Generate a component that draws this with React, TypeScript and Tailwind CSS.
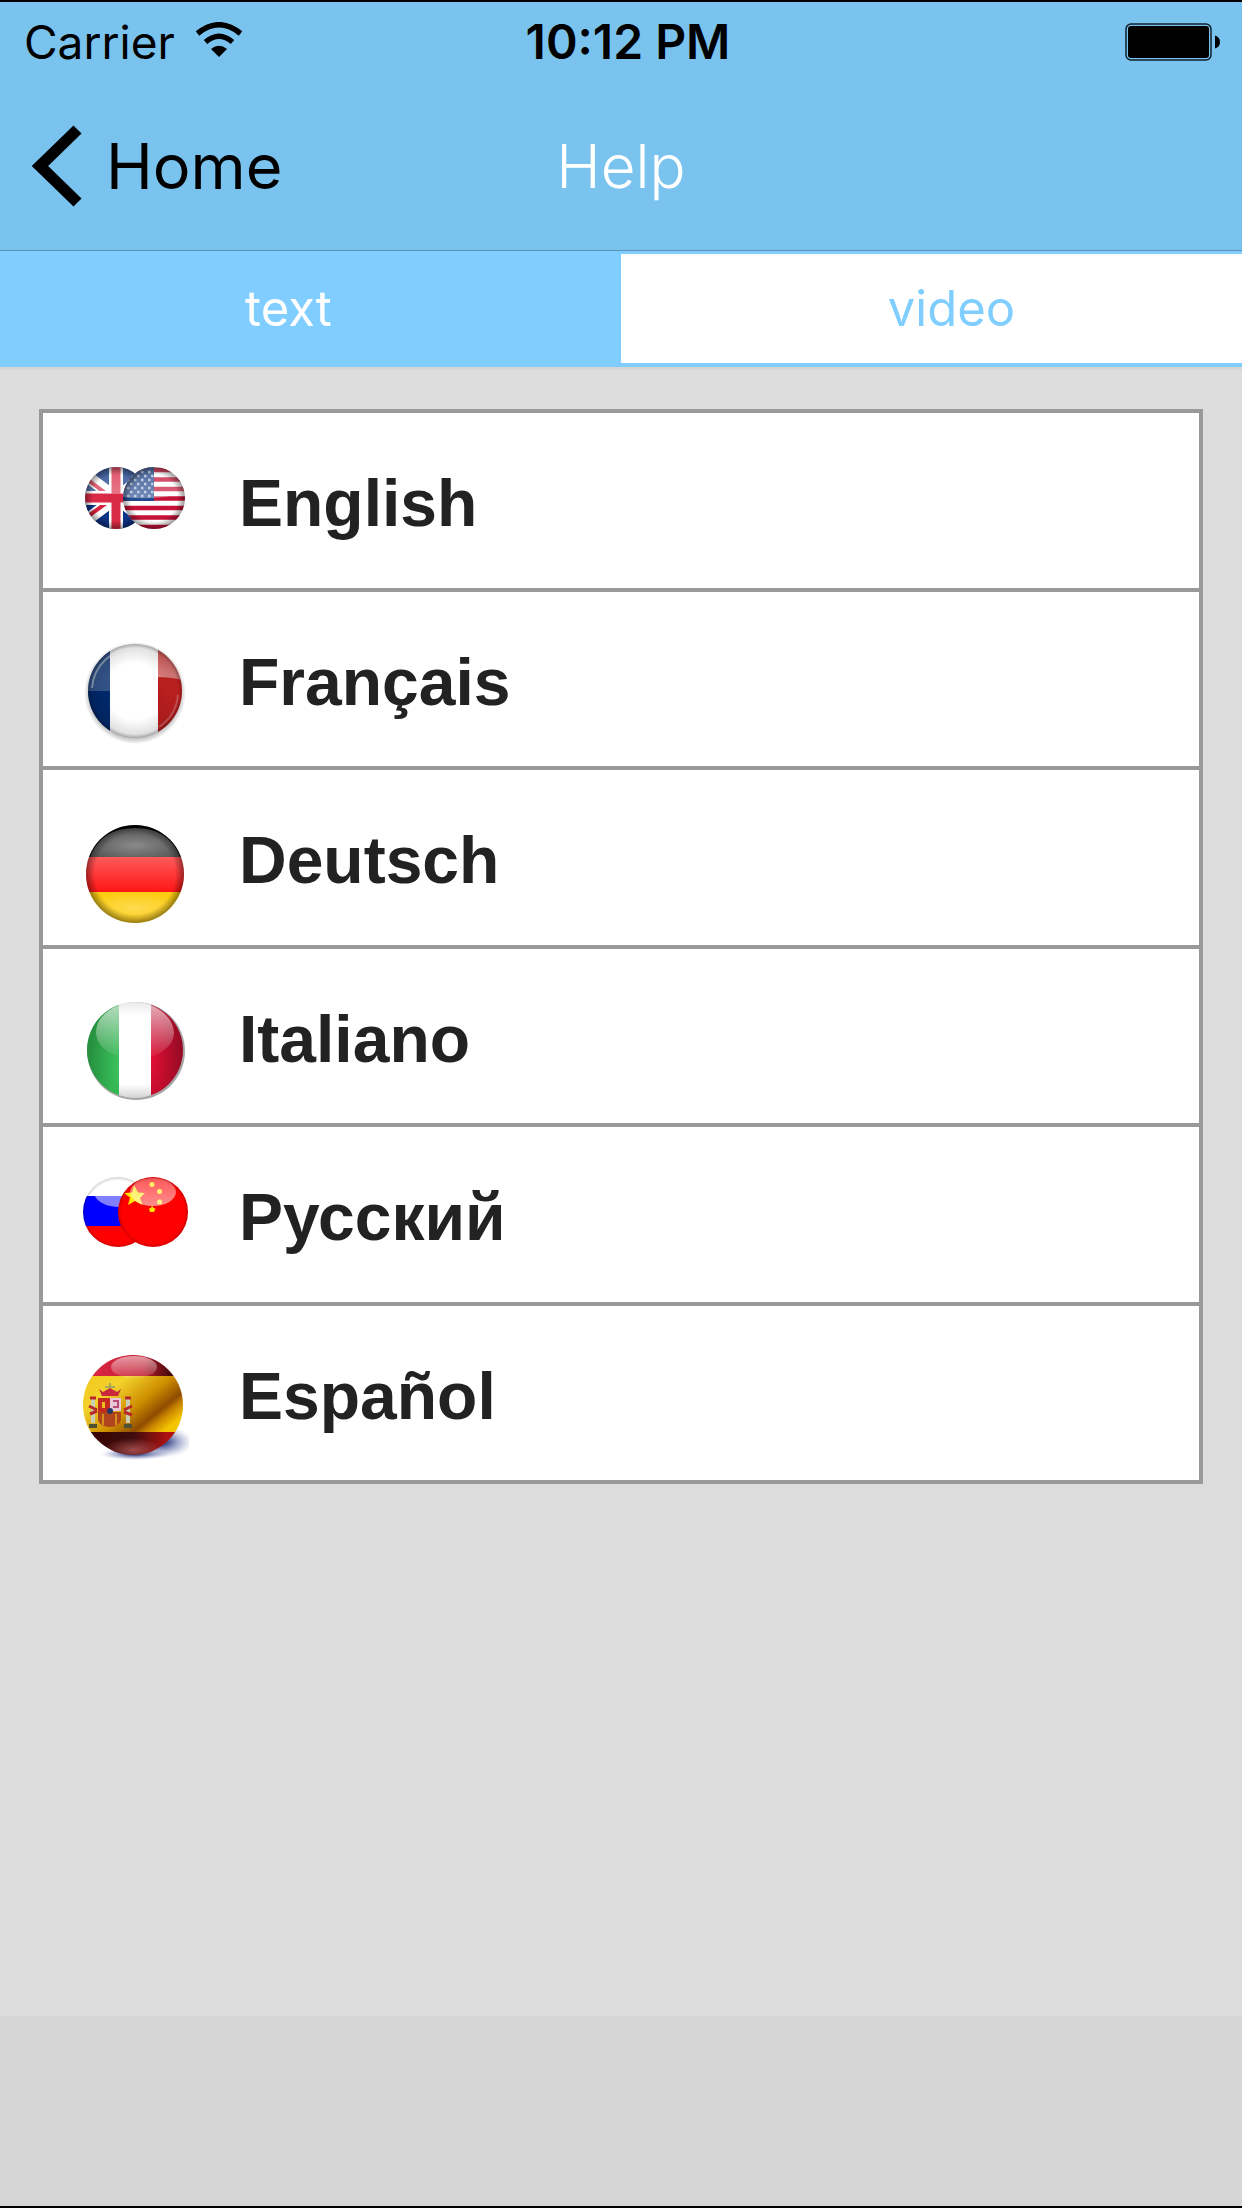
import React, { useState } from "react";

const UkUsFlag = () => (
    <svg viewBox="0 0 108 108" className="w-[108px] h-[108px]" aria-hidden="true">
        <defs>
            <clipPath id="uk-clip"><circle cx="35" cy="37" r="31" /></clipPath>
            <clipPath id="us-clip"><circle cx="73" cy="37" r="31" /></clipPath>
            <radialGradient id="pair-edge">
                <stop offset="0.75" stopColor="#000" stopOpacity="0" />
                <stop offset="1" stopColor="#000" stopOpacity="0.4" />
            </radialGradient>
            <linearGradient id="pair-gloss" x1="0" y1="0" x2="0" y2="1">
                <stop offset="0" stopColor="#fff" stopOpacity="0.2" />
                <stop offset="1" stopColor="#fff" stopOpacity="0.35" />
            </linearGradient>
        </defs>
        <g clipPath="url(#uk-clip)">
            <rect x="4" y="6" width="62" height="62" fill="#0d3486" />
            <path d="M-5 7L75 67M-5 67L75 7" stroke="#fff" strokeWidth="12" />
            <path d="M-5 10L35 40M-5 64L35 35M75 10L35 40M75 64L35 35" stroke="#d4213d" strokeWidth="4" />
            <path d="M35 5V69M3 37H67" stroke="#fff" strokeWidth="14" />
            <path d="M35 5V69M3 37H67" stroke="#d92b45" strokeWidth="9" />
            <path d="M4 6H66V30Q35 36 4 30Z" fill="url(#pair-gloss)" />
        </g>
        <circle cx="35" cy="37" r="31" fill="url(#pair-edge)" />
        <g clipPath="url(#us-clip)">
            <rect x="42" y="6" width="62" height="62" fill="#fff" />
            <path d="M42 9H104M42 18.500H104M42 28H104M42 37.500H104M42 47H104M42 56.500H104M42 66H104" stroke="#c61237" strokeWidth="4.600" />
            <rect x="42" y="6" width="31" height="34" fill="#24498c" />
            <path d="M46 11H73M46 19H73M46 27H73M46 35H73" stroke="#a9bbd8" strokeWidth="2.400" strokeDasharray="2.500 4.500" />
            <path d="M49 15H73M49 23H73M49 31H73" stroke="#a9bbd8" strokeWidth="2.400" strokeDasharray="2.500 4.500" />
            <path d="M42 6H104V32Q73 40 42 36Z" fill="url(#pair-gloss)" />
        </g>
        <circle cx="73" cy="37" r="31" fill="url(#pair-edge)" />
    </svg>
);

const FranceFlag = () => (
    <svg viewBox="0 0 108 108" className="w-[108px] h-[108px]" aria-hidden="true">
        <defs>
            <clipPath id="fr-clip"><circle cx="54" cy="51" r="47" /></clipPath>
            <radialGradient id="fr-edge">
                <stop offset="0.6" stopColor="#000" stopOpacity="0" />
                <stop offset="0.92" stopColor="#000" stopOpacity="0.12" />
                <stop offset="1" stopColor="#000" stopOpacity="0.35" />
            </radialGradient>
            <radialGradient id="fr-shadow">
                <stop offset="0.86" stopColor="#000" stopOpacity="0.3" />
                <stop offset="1" stopColor="#000" stopOpacity="0" />
            </radialGradient>
            <linearGradient id="fr-gloss" x1="0" y1="0" x2="0" y2="1">
                <stop offset="0" stopColor="#fff" stopOpacity="0.2" />
                <stop offset="1" stopColor="#fff" stopOpacity="0.45" />
            </linearGradient>
            <radialGradient id="fr-red" cx="0.1" cy="0.6" r="0.9">
                <stop offset="0" stopColor="#b01c1c" />
                <stop offset="1" stopColor="#dc2626" />
            </radialGradient>
        </defs>
        <circle cx="54" cy="53" r="51" fill="url(#fr-shadow)" />
        <g clipPath="url(#fr-clip)">
            <rect x="6" y="3" width="96" height="96" fill="#fff" />
            <rect x="6" y="3" width="23" height="96" fill="#00286b" />
            <rect x="77" y="3" width="26" height="96" fill="url(#fr-red)" />
            <rect x="6" y="3" width="23" height="48" fill="#fff" fillOpacity="0.2" />
            <path d="M77 3H102V40Q88 37 77 37Z" fill="url(#fr-gloss)" />
            <path d="M11 48A43 43 0 0 1 54 8" stroke="#fff" strokeOpacity="0.4" strokeWidth="2" fill="none" />
            <path d="M97 55A43 43 0 0 1 78 87" stroke="#fff" strokeOpacity="0.25" strokeWidth="2" fill="none" />
        </g>
        <circle cx="54" cy="51" r="47" fill="url(#fr-edge)" />
    </svg>
);

const GermanyFlag = () => (
    <svg viewBox="0 0 108 108" className="w-[108px] h-[108px]" aria-hidden="true">
        <defs>
            <clipPath id="de-clip"><circle cx="54" cy="56" r="49" /></clipPath>
            <radialGradient id="de-edge">
                <stop offset="0.82" stopColor="#000" stopOpacity="0" />
                <stop offset="1" stopColor="#000" stopOpacity="0.4" />
            </radialGradient>
            <radialGradient id="de-black" cx="0.5" cy="0.6" r="0.6">
                <stop offset="0" stopColor="#8a8a8a" />
                <stop offset="1" stopColor="#545454" />
            </radialGradient>
            <linearGradient id="de-red" x1="0" y1="0" x2="0" y2="1">
                <stop offset="0" stopColor="#ff5a5a" />
                <stop offset="1" stopColor="#ff1515" />
            </linearGradient>
            <radialGradient id="de-gold">
                <stop offset="0" stopColor="#ffdc50" />
                <stop offset="1" stopColor="#fbcb12" />
            </radialGradient>
        </defs>
        <g clipPath="url(#de-clip)">
            <rect x="4" y="6" width="100" height="34" fill="#000" />
            <path d="M9 39Q20 10 54 10Q88 10 99 39Z" fill="url(#de-black)" />
            <rect x="4" y="39" width="100" height="35" fill="url(#de-red)" />
            <rect x="4" y="74" width="100" height="32" fill="url(#de-gold)" />
        </g>
        <circle cx="54" cy="56" r="49" fill="url(#de-edge)" />
    </svg>
);

const ItalyFlag = () => (
    <svg viewBox="0 0 108 108" className="w-[108px] h-[108px]" aria-hidden="true">
        <defs>
            <clipPath id="it-clip"><circle cx="54" cy="53" r="48" /></clipPath>
            <radialGradient id="it-green" cx="1" cy="0.7" r="0.9">
                <stop offset="0" stopColor="#3cc45c" />
                <stop offset="1" stopColor="#26913f" />
            </radialGradient>
            <radialGradient id="it-red" cx="0" cy="0.6" r="0.9">
                <stop offset="0" stopColor="#e30f35" />
                <stop offset="1" stopColor="#960a24" />
            </radialGradient>
            <linearGradient id="it-gloss" x1="0" y1="0" x2="0" y2="1">
                <stop offset="0" stopColor="#fff" stopOpacity="0.65" />
                <stop offset="1" stopColor="#fff" stopOpacity="0.05" />
            </linearGradient>
            <linearGradient id="it-white" x1="0" y1="0" x2="0" y2="1">
                <stop offset="0" stopColor="#e8e8e8" />
                <stop offset="0.150" stopColor="#fff" />
                <stop offset="0.850" stopColor="#fff" />
                <stop offset="1" stopColor="#cfcfcf" />
            </linearGradient>
        </defs>
        <circle cx="55" cy="54" r="49" fill="#000" fillOpacity="0.35" />
        <g clipPath="url(#it-clip)">
            <rect x="5" y="4" width="33" height="98" fill="url(#it-green)" />
            <rect x="38" y="4" width="32" height="98" fill="url(#it-white)" />
            <rect x="70" y="4" width="34" height="98" fill="url(#it-red)" />
            <path d="M38 8Q15 18 15 36Q16 52 38 60ZM70 8Q92 18 93 36Q92 52 70 60Z" fill="url(#it-gloss)" />
        </g>
    </svg>
);

const RussiaChinaFlag = () => (
    <svg viewBox="0 0 108 108" className="w-[108px] h-[108px]" aria-hidden="true">
        <defs>
            <clipPath id="ru-clip"><circle cx="37" cy="37" r="35" /></clipPath>
            <radialGradient id="ru-edge">
                <stop offset="0.9" stopColor="#000" stopOpacity="0" />
                <stop offset="1" stopColor="#000" stopOpacity="0.18" />
            </radialGradient>
            <linearGradient id="cn-gloss" x1="0" y1="0" x2="0" y2="1">
                <stop offset="0" stopColor="#fff" stopOpacity="0.35" />
                <stop offset="1" stopColor="#fff" stopOpacity="0.55" />
            </linearGradient>
        </defs>
        <g clipPath="url(#ru-clip)">
            <rect x="2" y="2" width="70" height="19" fill="#fff" />
            <rect x="2" y="21" width="70" height="30" fill="#00f" />
            <rect x="2" y="51" width="70" height="21" fill="#f00" />
            <ellipse cx="37" cy="17" rx="24" ry="15" fill="#fff" fillOpacity="0.5" />
        </g>
        <circle cx="37" cy="37" r="35" fill="url(#ru-edge)" />
        <circle cx="72" cy="37" r="35" fill="#f00" />
        <path d="M53 10L57 17.500L64 18L59 23L61.500 30L54 26L47 30L49 22.500L43 18L51 17.500Z" fill="#ffe600" />
        <circle cx="71" cy="9.500" r="2.500" fill="#ffe600" />
        <circle cx="78.500" cy="16.500" r="2.500" fill="#ffe600" />
        <circle cx="78.500" cy="27" r="2.500" fill="#ffe600" />
        <path d="M71 30.500L72.500 33L74.500 33.500L73 37H69L68 33.500L70 33Z" fill="#ffe600" />
        <ellipse cx="72" cy="17" rx="23" ry="14" fill="url(#cn-gloss)" />
        <circle cx="72" cy="37" r="35" fill="url(#ru-edge)" />
    </svg>
);

const SpainFlag = () => (
    <svg viewBox="0 0 108 108" className="w-[108px] h-[108px]" aria-hidden="true">
        <defs>
            <clipPath id="es-clip"><circle cx="52" cy="51" r="50" /></clipPath>
            <linearGradient id="es-gold" x1="0" y1="0" x2="1" y2="0.700">
                <stop offset="0" stopColor="#f2c81a" />
                <stop offset="0.300" stopColor="#f2d22c" />
                <stop offset="0.600" stopColor="#cf8f00" />
                <stop offset="0.800" stopColor="#8f4c00" />
                <stop offset="0.880" stopColor="#c98600" />
                <stop offset="1" stopColor="#f5c400" />
            </linearGradient>
            <linearGradient id="es-top" x1="0" y1="0" x2="1" y2="0">
                <stop offset="0" stopColor="#e02a48" />
                <stop offset="0.600" stopColor="#c01c30" />
                <stop offset="0.900" stopColor="#3a0808" />
            </linearGradient>
            <linearGradient id="es-bottom" x1="0" y1="0" x2="1" y2="0">
                <stop offset="0.150" stopColor="#3a0505" />
                <stop offset="0.500" stopColor="#3d0c0c" />
                <stop offset="0.850" stopColor="#b01212" />
            </linearGradient>
            <radialGradient id="es-shadow">
                <stop offset="0.200" stopColor="#2c3a80" stopOpacity="0.9" />
                <stop offset="1" stopColor="#8a94c8" stopOpacity="0" />
            </radialGradient>
            <radialGradient id="es-glow">
                <stop offset="0" stopColor="#f88" stopOpacity="0.5" />
                <stop offset="1" stopColor="#f88" stopOpacity="0" />
            </radialGradient>
            <linearGradient id="es-gloss" x1="0" y1="0" x2="0" y2="1">
                <stop offset="0" stopColor="#fff" stopOpacity="0.55" />
                <stop offset="1" stopColor="#fff" stopOpacity="0.1" />
            </linearGradient>
        </defs>
        <ellipse cx="80" cy="88" rx="32" ry="16" fill="url(#es-shadow)" />
        <ellipse cx="54" cy="100" rx="34" ry="6" fill="url(#es-shadow)" />
        <g clipPath="url(#es-clip)">
            <rect x="2" y="0" width="100" height="22" fill="url(#es-top)" />
            <rect x="2" y="22" width="100" height="57" fill="url(#es-gold)" />
            <rect x="2" y="78" width="100" height="24" fill="url(#es-bottom)" />
            <ellipse cx="52" cy="96" rx="30" ry="12" fill="url(#es-glow)" />
            <ellipse cx="53" cy="13" rx="23" ry="11" fill="url(#es-gloss)" />
        </g>
        {/* coat of arms */}
        <path d="M18 35L22 38L29 34L36 38L40 35L37 42H21Z" fill="#c8283a" />
        <path d="M24 33H34M29 29V34" stroke="#a8a85a" strokeWidth="2" />
        <path d="M17 44H29V58H17Z" fill="#c42a20" />
        <path d="M29 44H40V57H29Z" fill="#e8c8d8" />
        <path d="M32 47H37V53H32" stroke="#b84a78" strokeWidth="2" fill="none" />
        <path d="M17 58H40V66Q38 73 29 73Q19 73 17 66Z" fill="#b0441c" />
        <path d="M22 60V71M35 60V71" stroke="#d8901c" strokeWidth="2" />
        <path d="M21 48H24V54H21Z" fill="#e8c020" />
        <circle cx="29" cy="57" r="3" fill="#243a66" />
        <path d="M12 43V69M47 43V69" stroke="#c9cdb4" strokeWidth="4" />
        <path d="M8 52L16 56M9 60L16 57M43 56L51 52M43 58L51 61M9 44H15M44 44H50" stroke="#b82a28" strokeWidth="3" />
        <path d="M8 72H16M43 72H51" stroke="#4f5230" strokeWidth="4" />
    </svg>
);

const languages = [
    { name: "English", Flag: UkUsFlag },
    { name: "Français", Flag: FranceFlag },
    { name: "Deutsch", Flag: GermanyFlag },
    { name: "Italiano", Flag: ItalyFlag },
    { name: "Русский", Flag: RussiaChinaFlag },
    { name: "Español", Flag: SpainFlag },
];

const StatusBar = () => (
    <div className="grid grid-cols-3 items-center h-20 pl-6 pr-[22px] text-[46px] leading-none text-black">
        <div className="flex items-center gap-5">
            <span>Carrier</span>
            <svg viewBox="0 0 48 36" className="w-12 h-9 mb-1" aria-hidden="true">
                <path d="M2.500 11.500Q24 -6 45.500 11.500" fill="none" stroke="#000" strokeWidth="5.500" />
                <path d="M10.500 20Q24 8.500 37.500 20" fill="none" stroke="#000" strokeWidth="5.500" />
                <path d="M16 27Q24 20.500 32 27L24 35Z" fill="#000" />
            </svg>
        </div>
        <span className="pl-3 text-center text-[48px] font-semibold whitespace-nowrap">10:12 PM</span>
        <svg viewBox="0 0 95 38" className="w-[95px] h-[38px] justify-self-end" aria-hidden="true">
            <rect x="1" y="1" width="85" height="36" rx="5" fill="none" stroke="#10202b" strokeWidth="1.500" />
            <rect x="3" y="3" width="81" height="32" rx="3" fill="#000" />
            <path d="M90 12.500Q95 14 95 19Q95 24 90 25.500Z" fill="#000" />
        </svg>
    </div>
);

const App = () => {
    const [tab, setTab] = useState("text");

    const tabClass = (active: boolean) =>
        active ? "bg-[#7fceff] text-white" : "bg-white text-[#7fceff]";

    return (
        <div className="flex flex-col w-full min-h-screen bg-[#ddd] border-y-2 border-black font-['Inter',sans-serif]">
            <header className="bg-[#7ac3ee] border-b border-[#5b93b5]">
                <StatusBar />
                <div className="grid grid-cols-3 items-center h-[168px] px-8">
                    <button className="flex items-center gap-6 text-[63px] leading-none text-black">
                        <svg viewBox="0 0 50 82" className="w-[50px] h-[82px]" aria-hidden="true">
                            <path d="M45.500 4.500L8 41L45.500 77.500" fill="none" stroke="#000" strokeWidth="11.500" />
                        </svg>
                        Home
                    </button>
                    <h1 className="text-center text-[60px] leading-none font-light text-white">Help</h1>
                </div>
            </header>

            <div className="grid grid-cols-2 h-[116px] pt-[3px] pb-1 bg-[#7fceff] text-[49px] leading-none" role="tablist">
                <button role="tab" aria-selected={tab === "text"} onClick={() => setTab("text")} className={`pr-11 ${tabClass(tab === "text")}`}>
                    text
                </button>
                <button role="tab" aria-selected={tab === "video"} onClick={() => setTab("video")} className={`pl-10 ${tabClass(tab === "video")}`}>
                    video
                </button>
            </div>

            <main className="grow px-[39px] pt-[39px] border-t-[3px] border-[#d5d5d5]">
                <ul className="bg-white border-4 border-b-0 border-[#999]">
                    {languages.map(({ name, Flag }) => (
                        <li key={name} className="odd:h-[179px] even:h-[178px] border-b-4 border-[#999]">
                            <a href="#" className="flex items-start h-full pl-[38px] pt-12 gap-[50px]">
                                <Flag />
                                <span className="font-['Liberation_Sans',Arial,sans-serif] text-[66px] leading-[84px] font-bold text-[#222]">{name}</span>
                            </a>
                        </li>
                    ))}
                </ul>
            </main>

            <footer className="h-[190px] bg-[#d5d5d5]"></footer>
        </div>
    );
};

export default App;
